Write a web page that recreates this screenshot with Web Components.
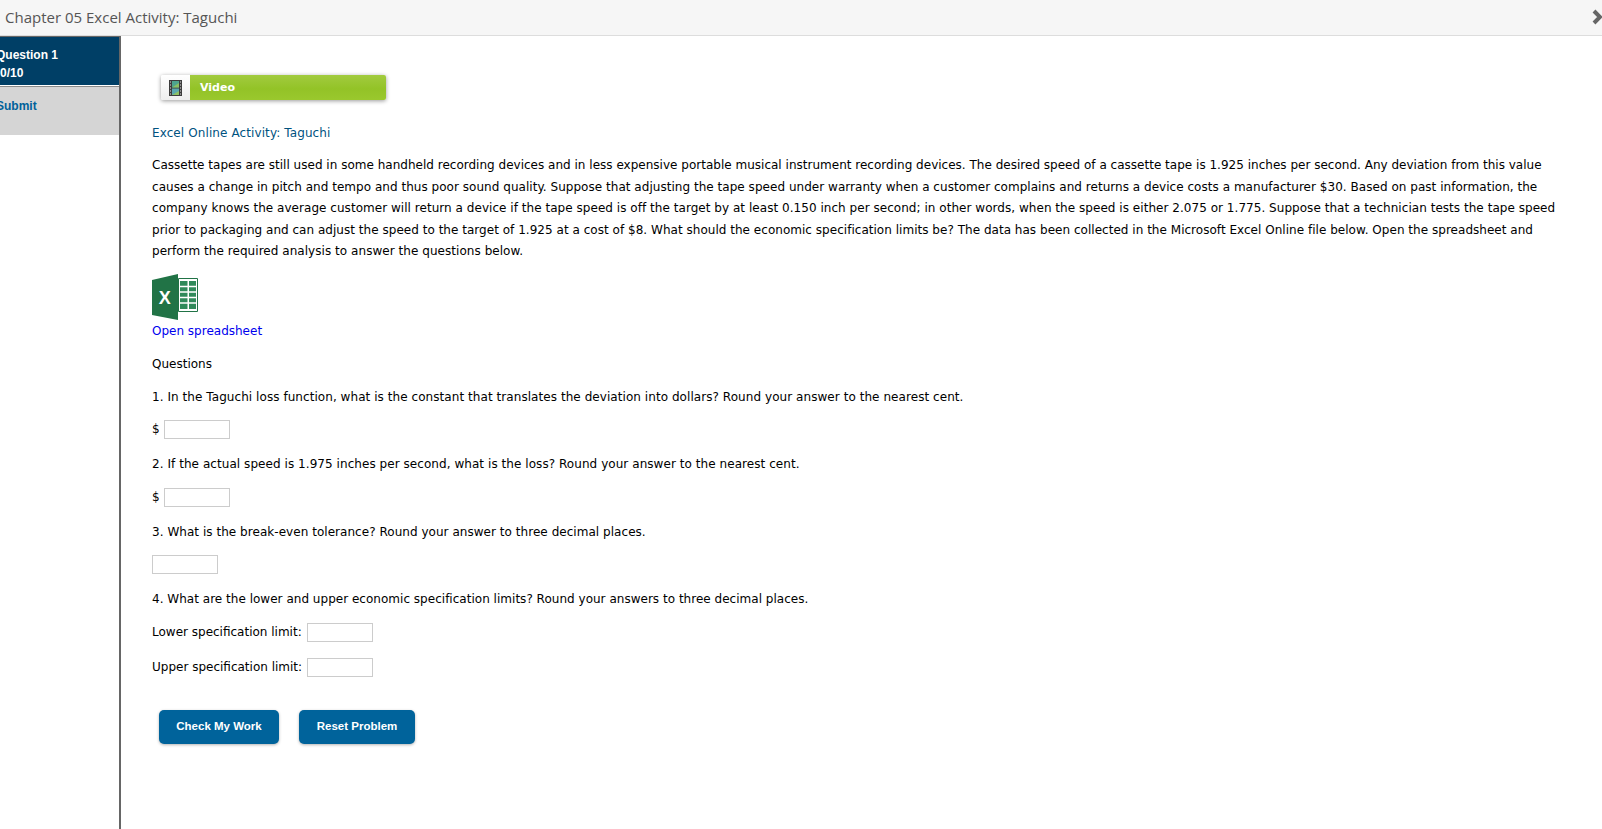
<!DOCTYPE html>
<html><head><meta charset="utf-8"><style>
html,body{margin:0;padding:0;background:#fff;height:100%;overflow:hidden}
body{font-family:"DejaVu Sans",sans-serif;font-size:12px;color:#000}
</style></head><body>
<template id="t-app"><style>
:host{display:flex;flex-direction:column;height:829px;width:1602px;overflow:hidden}
.main{display:flex;flex:1;min-height:0}
</style><slot name="bar"></slot><div class="main"><slot name="side"></slot><slot></slot></div></template>

<template id="t-bar"><style>
:host{display:flex;align-items:center;justify-content:space-between;box-sizing:content-box;height:33px;padding:0 0 2px 5px;background:#f6f6f6;border-bottom:1px solid #ddd;font:15px "Open Sans",sans-serif;color:#555;overflow:hidden;flex:none}
svg{display:block;margin-right:-4px;flex:none}
</style><span><slot></slot></span><svg width="14" height="16" viewBox="0 0 14 16"><path d="M2 2l6 6-6 6" fill="none" stroke="#666" stroke-width="4"/></svg></template>

<template id="t-side"><style>
:host{display:block;width:119px;border-right:2px solid #666;border-top:1px solid #666;flex:none;font:bold 12px "Liberation Sans",sans-serif}
.q{background:#003f66;color:#fff;height:48px;line-height:18px;padding-top:9px;box-sizing:border-box;text-indent:-4px}
.s{margin-top:1px;border-top:1px solid #8a8a8a;background:#d5d5d5;color:#00619a;height:49px;padding-top:12px;box-sizing:border-box;text-indent:-4px}
</style><div class="q">Question 1<br>0/10</div><div class="s">Submit</div></template>

<template id="t-video"><style>
:host{display:flex;width:225px;height:25px;border-radius:2px;box-shadow:0 1px 4px rgba(0,0,0,.4);overflow:hidden;margin:39px 0 0 9px}
.i{width:29px;background:linear-gradient(#fff,#eee);display:flex;align-items:center;justify-content:center}
.l{flex:1;background:linear-gradient(#a2cb3f,#93c327 55%,#9ac82d);color:#fff;font:bold 11px/25px "DejaVu Sans",sans-serif;padding-left:10px}
</style><div class="i"><svg width="13" height="16" viewBox="0 0 13 16"><rect width="13" height="16" fill="#3d3d3d"/><rect x="3" y="1" width="7" height="6.500" fill="#4ea58e"/><rect x="3" y="8.500" width="7" height="6.500" fill="#5aa8b0"/><path d="M3 7.500L10 3v4.500zM3 15l7-4v4z" fill="#8cc063"/><path d="M1 2h1M1 5h1M1 8h1M1 11h1M1 14h1M11 2h1M11 5h1M11 8h1M11 11h1M11 14h1" stroke="#ddd"/></svg></div><div class="l"><slot></slot></div></template>

<template id="t-field"><style>
:host{display:block;height:19px;line-height:19px;margin-top:12px;white-space:pre}
:host([tight]){margin-top:16px}
i{display:inline-block;width:64px;height:17px;border:1px solid #ccc;vertical-align:top;background:#fff}
:host([label]) i{margin-left:1px}
</style><slot></slot><i></i></template>

<template id="t-btn"><style>
:host{display:block;box-sizing:border-box;height:34px;background:#00639b;color:#fff;border-radius:5px;font:bold 11.5px/33px "Liberation Sans",sans-serif;box-shadow:0 1px 3px rgba(0,0,0,.3);text-align:center}
</style><slot></slot></template>

<template id="t-content"><style>
:host{display:block;flex:1;padding:0 0 0 31px;min-width:0;line-height:21.5px}
h1{font:12px/21px "DejaVu Sans",sans-serif;color:#00527f;margin:23px 0 0;letter-spacing:.1px}
p{margin:11px 0 0;width:1420px}
p span{display:block;white-space:nowrap}
x-field + p{margin-top:15px}
svg{display:block;margin-top:11px}
a{color:#00e;display:block;margin-top:1px}
.btns{display:flex;gap:20px;margin:33px 0 0 7px}
.btns x-btn:nth-child(1){width:120px}
.btns x-btn:nth-child(2){width:116px}
</style><slot></slot></template>

<x-app>
<x-bar slot="bar">Chapter 05 Excel Activity: Taguchi</x-bar>
<x-side slot="side"></x-side>
<x-content></x-content>
</x-app>
<script>
function def(n,t,extra){customElements.define(n,class extends HTMLElement{constructor(){super();const s=this.attachShadow({mode:'open'});s.appendChild(document.getElementById(t).content.cloneNode(true));if(extra)extra(s)}})}
def('x-app','t-app');def('x-bar','t-bar');def('x-side','t-side');def('x-video','t-video');def('x-field','t-field');def('x-btn','t-btn');
def('x-content','t-content',s=>{
const d=document.createElement('div');
d.innerHTML=`<x-video>Video</x-video>
<h1>Excel Online Activity: Taguchi</h1>
<p><span style="letter-spacing:.011px">Cassette tapes are still used in some handheld recording devices and in less expensive portable musical instrument recording devices. The desired speed of a cassette tape is 1.925 inches per second. Any deviation from this value</span>
<span style="letter-spacing:.033px">causes a change in pitch and tempo and thus poor sound quality. Suppose that adjusting the tape speed under warranty when a customer complains and returns a device costs a manufacturer $30. Based on past information, the</span>
<span style="letter-spacing:.038px">company knows the average customer will return a device if the tape speed is off the target by at least 0.150 inch per second; in other words, when the speed is either 2.075 or 1.775. Suppose that a technician tests the tape speed</span>
<span style="letter-spacing:.027px">prior to packaging and can adjust the speed to the target of 1.925 at a cost of $8. What should the economic specification limits be? The data has been collected in the Microsoft Excel Online file below. Open the spreadsheet and</span>
<span style="letter-spacing:.046px">perform the required analysis to answer the questions below.</span></p>
<svg width="46" height="46" viewBox="0 0 46 46"><path d="M26.500 4.500h19v33h-19z" fill="#fff" stroke="#217346"/><path d="M28 7h7.500v28H28zM37 7h7v28h-7z" fill="#2f8a5a"/><path d="M28 12.500h16M28 18h16M28 23.500h16M28 29h16" stroke="#fff" stroke-width="1.500"/><path d="M0 6L26 0v46L0 41z" fill="#217346"/><text x="12.700" y="29.500" font-family="Liberation Sans" font-weight="700" font-size="18" fill="#fff" text-anchor="middle">X</text></svg>
<a>Open spreadsheet</a>
<p style="margin-top:12px">Questions</p>
<p style="letter-spacing:.06px">1. In the Taguchi loss function, what is the constant that translates the deviation into dollars? Round your answer to the nearest cent.</p>
<x-field label>$ </x-field>
<p style="letter-spacing:.057px">2. If the actual speed is 1.975 inches per second, what is the loss? Round your answer to the nearest cent.</p>
<x-field label>$ </x-field>
<p style="letter-spacing:.04px">3. What is the break-even tolerance? Round your answer to three decimal places.</p>
<x-field></x-field>
<p style="letter-spacing:.02px">4. What are the lower and upper economic specification limits? Round your answers to three decimal places.</p>
<x-field label>Lower specification limit: </x-field>
<x-field label tight>Upper specification limit: </x-field>
<div class="btns"><x-btn>Check My Work</x-btn><x-btn>Reset Problem</x-btn></div>`;
while(d.firstChild)s.appendChild(d.firstChild);
});
</script>
</body></html>
